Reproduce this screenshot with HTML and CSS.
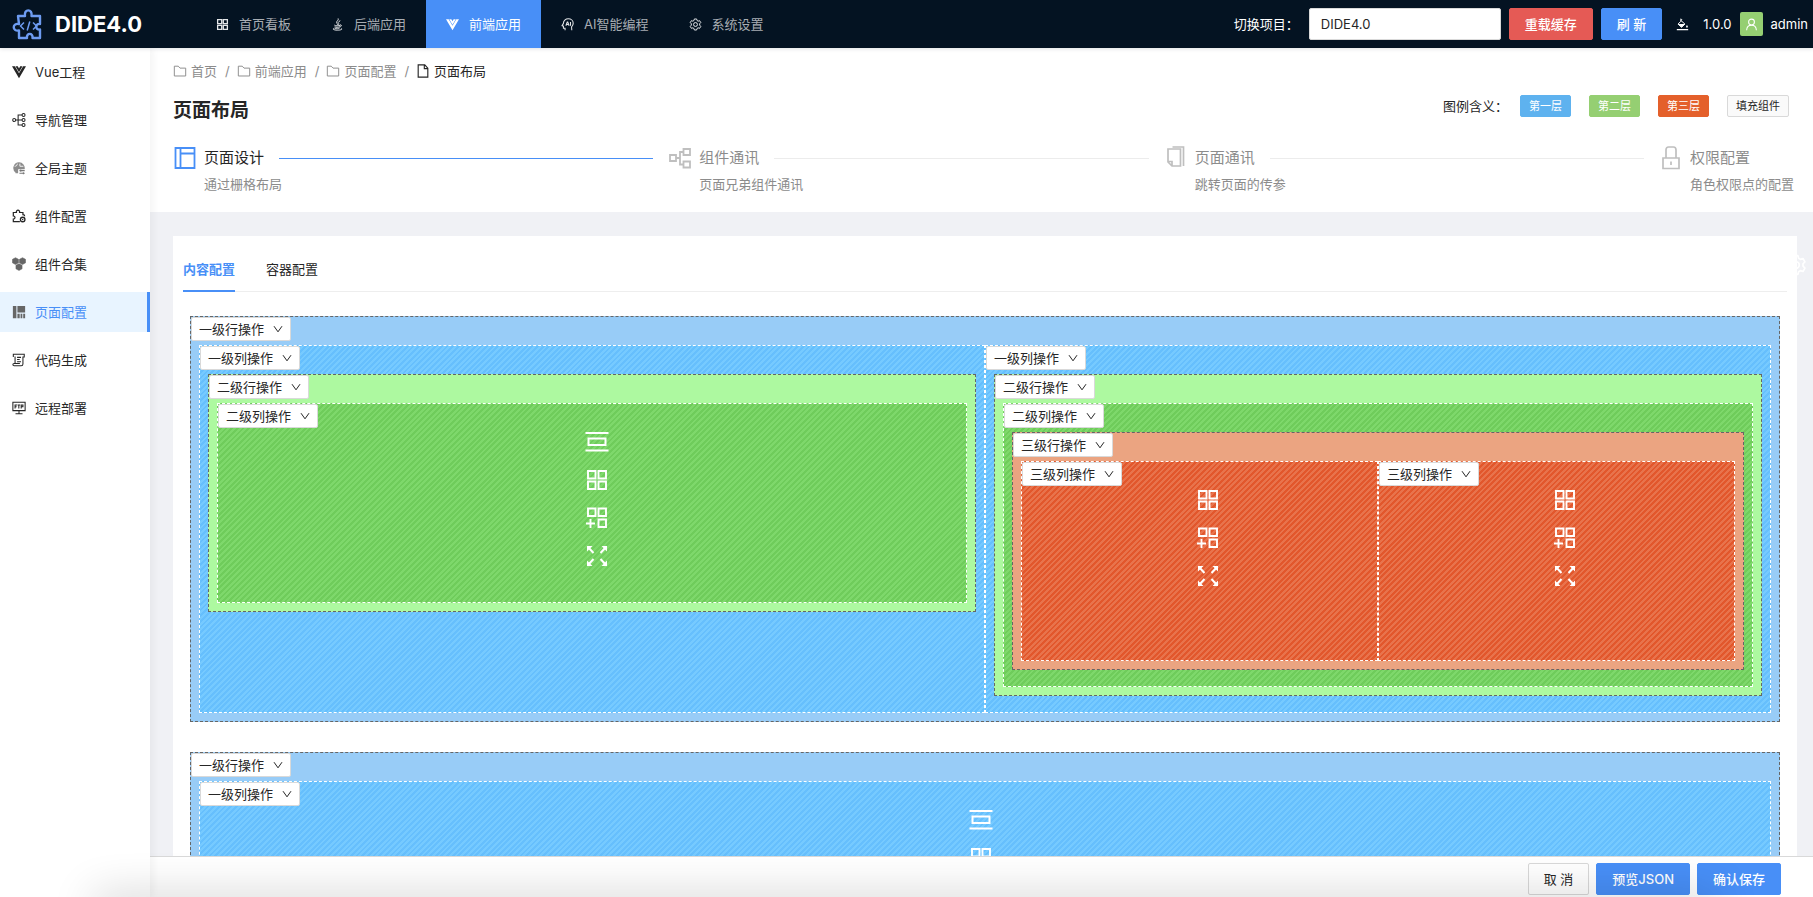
FILE: index.html
```html
<!DOCTYPE html>
<html lang="zh-CN">
<head>
<meta charset="utf-8">
<title>DIDE4.0 页面布局</title>
<link rel="stylesheet" href="styles.css">
</head>
<body>
<svg class="sprite" aria-hidden="true">
  <symbol id="i-grid" viewBox="0 0 16 16"><path d="M2 2h5v5H2zM9 2h5v5H9zM2 9h5v5H2zM9 9h5v5H9z" fill="none" stroke="currentColor" stroke-width="1.6"/></symbol>
  <symbol id="i-java" viewBox="0 0 16 16"><path d="M9 1C10 3 6 4 7 6c.5 1 1.300 1.300 1 2.500M11 3.500C8.500 5 8.500 5.500 9.300 6.500 10 7.500 9 8 9 8.500M4.500 9c1.500 1 5 1 6.500 0M11.500 8.500c2-.5 2 2-.5 2.500M5 11c1.500.8 4 .8 5.500 0M5.500 12.800c1.500.6 3 .6 4.500 0M4 12.500c-4 1.500 1 2.500 4 2.500s7-.8 5-2" fill="none" stroke="currentColor" stroke-width="1.200" stroke-linecap="round"/></symbol>
  <symbol id="i-vue" viewBox="0 0 16 16"><path d="M0 1.500h3.300L8 9.500l4.700-8H16L8 15z" fill="currentColor"/><path d="M4 1.500h2.600L8 4l1.400-2.500H12L8 8.300z" fill="currentColor"/></symbol>
  <symbol id="i-ai" viewBox="0 0 16 16"><path d="M5 15v-2.500H3V10L1.300 9.500 3 6.500C3 3.500 5.500 1 9 1s6 2.500 6 5.500c0 2-1 3.500-2 4.500l.3 4" fill="none" stroke="currentColor" stroke-width="1.300"/><path d="M6 9.500 7.700 5h.6L10 9.500M6.600 8h2.800M11.700 5v4.500" fill="none" stroke="currentColor" stroke-width="1.300"/></symbol>
  <symbol id="i-gear" viewBox="0 0 16 16"><path d="M6.600 1.200h2.800l.5 1.900 1.300.8 1.900-.6 1.400 2.400-1.400 1.400v1.700l1.400 1.500-1.400 2.400-1.900-.6-1.300.8-.5 1.900H6.600l-.5-1.900-1.300-.8-1.900.6-1.400-2.400 1.400-1.500V7.100L1.500 5.700l1.400-2.400 1.900.6 1.300-.8z" fill="none" stroke="currentColor" stroke-width="1.200" stroke-linejoin="round"/><circle cx="8" cy="8" r="2.400" fill="none" stroke="currentColor" stroke-width="1.200"/></symbol>
  <symbol id="i-bucket" viewBox="0 0 16 16"><path d="m6 1 1 1-1 1 5 4.500L6.800 11.500 2.500 7.500 6 4z" fill="none" stroke="currentColor" stroke-width="1.200"/><path d="M3 7.500h8l-4.200 4zM13.500 8.500c1.600 2 1.400 3.200 0 3.200s-1.600-1.200 0-3.200zM1 13.400h14V15H1z" fill="currentColor"/></symbol>
  <symbol id="i-user" viewBox="0 0 16 16"><circle cx="8" cy="5" r="3.600" fill="none" stroke="currentColor" stroke-width="1.300"/><path d="M2 15c.2-3.500 2.500-6 6-6s5.800 2.500 6 6" fill="none" stroke="currentColor" stroke-width="1.300"/></symbol>
  <symbol id="i-tree" viewBox="0 0 16 16"><g fill="none" stroke="currentColor" stroke-width="1.200"><circle cx="2.500" cy="8" r="1.700"/><circle cx="13.200" cy="2.300" r="1.700"/><circle cx="13.200" cy="8" r="1.700"/><circle cx="13.200" cy="13.700" r="1.700"/><path d="M4.200 8h7.300M11.500 2.300H7v11.400h4.500"/></g></symbol>
  <symbol id="i-theme" viewBox="0 0 16 16"><path d="M8 1.500a6.500 6.500 0 0 0-4 11.600V14h3V9.500h7.400A6.500 6.500 0 0 0 8 1.500z" fill="#8c8c8c"/><path d="M3 6c2 0 3-1 3-3M9 3v3h4" stroke="#fff" stroke-width="1" fill="none"/><path d="M8.500 11h6M8.500 14h6M10 9.800v2.400M13 12.800v2.400" stroke="#777" stroke-width="1.200"/></symbol>
  <symbol id="i-puzzle" viewBox="0 0 16 16"><path d="M9 14.500H1.500v-3c2.600 0 2.600-3.500 0-3.500V4h3.500c-.8-3.500 4.500-3.500 3.700 0h3.800v2.500c1 0 2 .7 2 1.700" fill="none" stroke="currentColor" stroke-width="1.400"/><circle cx="12.200" cy="12" r="2.600" fill="none" stroke="currentColor" stroke-width="1.500"/><circle cx="12.200" cy="12" r=".8" fill="currentColor"/></symbol>
  <symbol id="i-hex" viewBox="0 0 16 16"><path d="M4 .8 7.500 2.700v4L4 8.600.5 6.700v-4zM12 .8l3.500 1.900v4L12 8.600 8.500 6.700v-4zM8 7.600l3.500 1.900v4L8 15.400l-3.500-1.900v-4z" fill="#666" stroke="#666" stroke-width=".6"/></symbol>
  <symbol id="i-layout" viewBox="0 0 16 16"><path d="M1 1h4v14H1zM6.200 1H15v7.500H6.200zM6.200 10h2.600v5H6.200zM9.800 10h2v5h-2zM12.800 10H15v5h-2.200z" fill="#666"/></symbol>
  <symbol id="i-code" viewBox="0 0 16 16"><path d="M1.500 4.500V1.500h12.500v3h-2M3.500 4V12M12.500 4v8.500c0 2-1.500 2-2 2h-8c-2 0-2-2.500 0-2.500h6.500M5.800 5h4.500M5.800 7.500h3M5.800 10h4.500" fill="none" stroke="currentColor" stroke-width="1.200"/></symbol>
  <symbol id="i-ftp" viewBox="0 0 16 16"><path d="M1 1.500h14v9.500H1zM8 11v3.500M4 14.500h8M3.500 8.500v-4h2.200M3.500 6.500h1.800M6.300 4.500h3M7.800 4.500v4M10.500 8.500v-4h2v2h-2" fill="none" stroke="currentColor" stroke-width="1.200"/></symbol>
  <symbol id="i-folder" viewBox="0 0 16 16"><path d="M1.500 2.500h4.500l2 2.200h6.500v9h-13z" fill="none" stroke="currentColor" stroke-width="1.100"/></symbol>
  <symbol id="i-file" viewBox="0 0 16 16"><path d="M2.500 1h7.500l3.500 3.800V15h-11zM9.500 1v4.300h4" fill="none" stroke="currentColor" stroke-width="1.300"/></symbol>
  <symbol id="i-design" viewBox="0 0 24 24"><path d="M2.500 2h19v20h-19zM7.500 2v20M7.500 7.500h14" fill="none" stroke="currentColor" stroke-width="1.800"/></symbol>
  <symbol id="i-comm" viewBox="0 0 24 24"><path d="M2 9h6v6H2zM15.500 3h6.500v6h-6.500zM15.500 15.500h6.500v6h-6.500zM8 12h4M15.500 6H12v12.500h3.500" fill="none" stroke="currentColor" stroke-width="1.800"/></symbol>
  <symbol id="i-copy" viewBox="0 0 24 24"><path d="M4 3h12.500v17H8l-4-4zM8 20v-4.500H4M8.500 1h11v19" fill="none" stroke="currentColor" stroke-width="1.700"/></symbol>
  <symbol id="i-lock" viewBox="0 0 24 24"><path d="M4 12h16v10.500H4zM7 12V4c0-2 1-3 2.500-3h5c1.500 0 2.500 1 2.500 3v8M12 15.500v3.500" fill="none" stroke="currentColor" stroke-width="1.700"/></symbol>
  <symbol id="i-down" viewBox="0 0 10 10"><path d="M1 2.200 5 7.800 9 2.200" fill="none" stroke="currentColor" stroke-width="1"/></symbol>
  <symbol id="t-row" viewBox="0 0 24 24"><path d="M.5 3h23M.5 20.500h23M3.500 8.500h17v6.500h-17z" fill="none" stroke="currentColor" stroke-width="2"/></symbol>
  <symbol id="t-grid" viewBox="0 0 24 24"><path d="M3 3h7.500v7.500H3zM13.500 3H21v7.500h-7.500zM3 13.500h7.500V21H3zM13.500 13.500H21V21h-7.500z" fill="none" stroke="currentColor" stroke-width="1.900"/></symbol>
  <symbol id="t-add" viewBox="0 0 24 24"><path d="M3 2.500h7.500V10H3zM13.500 2.500H21V10h-7.500zM13.500 13.500H21V21h-7.500zM1 17.500h9M5.500 13v9" fill="none" stroke="currentColor" stroke-width="1.900"/></symbol>
  <symbol id="t-full" viewBox="0 0 24 24"><path d="M2.500 2.500 8.500 9M21.500 2.500l-6 6.500M2.500 21.500l6-6.500M21.500 21.500l-6-6.500" stroke="currentColor" stroke-width="2"/><path d="M2 2h5.500L2 7.500zM22 2v5.500L16.500 2zM2 22v-5.500L7.500 22zM22 22h-5.500l5.500-5.500z" fill="currentColor"/></symbol>
</svg>

<header class="topbar">
  <a class="brand" href="#">
    <svg class="brand-logo" viewBox="0 0 32 32"><path d="M6 8h7c-1.500-7.500 8-7.500 6.500 0H28v8c-5-1-5 6.500 0 5.500V30h-7.500c1-5.500-6.500-5.500-5.500 0H7v-7.500c-7 1.500-7-8 0-6.500z" fill="none" stroke="#6d9bf0" stroke-width="2.400" stroke-linejoin="round"/><path d="m12 14.500-3.500 3.500 3.500 3.500M21 14.500l3.500 3.500-3.500 3.500M17.800 13.500l-2.600 9" fill="none" stroke="#6d9bf0" stroke-width="1.500"/></svg>
    <span>DIDE4.0</span>
  </a>
  <nav class="mainnav">
    <a href="#"><svg><use href="#i-grid"/></svg>首页看板</a>
    <a href="#"><svg><use href="#i-java"/></svg>后端应用</a>
    <a href="#" class="active"><svg><use href="#i-vue"/></svg>前端应用</a>
    <a href="#"><svg><use href="#i-ai"/></svg>AI智能编程</a>
    <a href="#"><svg><use href="#i-gear"/></svg>系统设置</a>
  </nav>
  <div class="tools">
    <label for="project">切换项目：</label>
    <select id="project" class="project"><option>DIDE4.0</option></select>
    <button class="btn danger" type="button">重载缓存</button>
    <button class="btn primary" type="button">刷 新</button>
    <svg class="bucket"><use href="#i-bucket"/></svg>
    <span>1.0.0</span>
    <span class="avatar"><svg><use href="#i-user"/></svg></span>
    <span>admin</span>
  </div>
</header>

<div class="body">
  <nav class="sidebar">
    <a href="#"><svg><use href="#i-vue"/></svg>Vue工程</a>
    <a href="#"><svg><use href="#i-tree"/></svg>导航管理</a>
    <a href="#"><svg><use href="#i-theme"/></svg>全局主题</a>
    <a href="#"><svg><use href="#i-puzzle"/></svg>组件配置</a>
    <a href="#"><svg><use href="#i-hex"/></svg>组件合集</a>
    <a href="#" class="active"><svg><use href="#i-layout"/></svg>页面配置</a>
    <a href="#"><svg><use href="#i-code"/></svg>代码生成</a>
    <a href="#"><svg><use href="#i-ftp"/></svg>远程部署</a>
  </nav>

  <main class="main">
    <section class="pagehead">
      <nav class="crumbs">
        <a href="#"><svg><use href="#i-folder"/></svg>首页</a><span>/</span>
        <a href="#"><svg><use href="#i-folder"/></svg>前端应用</a><span>/</span>
        <a href="#"><svg><use href="#i-folder"/></svg>页面配置</a><span>/</span>
        <a href="#" class="current"><svg><use href="#i-file"/></svg>页面布局</a>
      </nav>
      <div class="titlebar">
        <h1>页面布局</h1>
        <div class="legend">
          <span>图例含义：</span>
          <div class="tags">
            <span class="tag blue">第一层</span>
            <span class="tag green">第二层</span>
            <span class="tag orange">第三层</span>
            <span class="tag plain">填充组件</span>
          </div>
        </div>
      </div>
      <ol class="steps">
        <li class="on"><svg><use href="#i-design"/></svg><div><h2>页面设计</h2><p>通过栅格布局</p></div></li>
        <li><svg><use href="#i-comm"/></svg><div><h2>组件通讯</h2><p>页面兄弟组件通讯</p></div></li>
        <li><svg><use href="#i-copy"/></svg><div><h2>页面通讯</h2><p>跳转页面的传参</p></div></li>
        <li><svg><use href="#i-lock"/></svg><div><h2>权限配置</h2><p>角色权限点的配置</p></div></li>
      </ol>
    </section>

    <div class="scroll">
      <button class="handle" type="button" aria-label="设置"><svg><use href="#i-gear"/></svg></button>
      <section class="card">
        <div class="tabs" role="tablist">
          <button type="button" role="tab" class="active" aria-selected="true">内容配置</button>
          <button type="button" role="tab">容器配置</button>
        </div>
        <div class="canvas">
          <div class="row r1">
            <button class="op" type="button">一级行操作<svg><use href="#i-down"/></svg></button>
            <div class="cols">
              <div class="col c1">
                <button class="op" type="button">一级列操作<svg><use href="#i-down"/></svg></button>
                <div class="row r2">
                  <button class="op" type="button">二级行操作<svg><use href="#i-down"/></svg></button>
                  <div class="cols">
                    <div class="col c2 leaf">
                      <button class="op" type="button">二级列操作<svg><use href="#i-down"/></svg></button>
                      <div class="acts"><svg><use href="#t-row"/></svg><svg><use href="#t-grid"/></svg><svg><use href="#t-add"/></svg><svg><use href="#t-full"/></svg></div>
                    </div>
                  </div>
                </div>
              </div>
              <div class="col c1">
                <button class="op" type="button">一级列操作<svg><use href="#i-down"/></svg></button>
                <div class="row r2">
                  <button class="op" type="button">二级行操作<svg><use href="#i-down"/></svg></button>
                  <div class="cols">
                    <div class="col c2">
                      <button class="op" type="button">二级列操作<svg><use href="#i-down"/></svg></button>
                      <div class="row r3">
                        <button class="op" type="button">三级行操作<svg><use href="#i-down"/></svg></button>
                        <div class="cols">
                          <div class="col c3 leaf">
                            <button class="op" type="button">三级列操作<svg><use href="#i-down"/></svg></button>
                            <div class="acts"><svg><use href="#t-grid"/></svg><svg><use href="#t-add"/></svg><svg><use href="#t-full"/></svg></div>
                          </div>
                          <div class="col c3 leaf">
                            <button class="op" type="button">三级列操作<svg><use href="#i-down"/></svg></button>
                            <div class="acts"><svg><use href="#t-grid"/></svg><svg><use href="#t-add"/></svg><svg><use href="#t-full"/></svg></div>
                          </div>
                        </div>
                      </div>
                    </div>
                  </div>
                </div>
              </div>
            </div>
          </div>
          <div class="row r1">
            <button class="op" type="button">一级行操作<svg><use href="#i-down"/></svg></button>
            <div class="cols">
              <div class="col c1 leaf">
                <button class="op" type="button">一级列操作<svg><use href="#i-down"/></svg></button>
                <div class="acts"><svg><use href="#t-row"/></svg><svg><use href="#t-grid"/></svg><svg><use href="#t-add"/></svg><svg><use href="#t-full"/></svg></div>
              </div>
            </div>
          </div>
        </div>
      </section>
    </div>

    <footer class="actions">
      <button class="btn default" type="button">取 消</button>
      <button class="btn primary" type="button">预览JSON</button>
      <button class="btn primary" type="button">确认保存</button>
    </footer>
  </main>
</div>
<div class="shade"></div>
</body>
</html>
```

FILE: styles.css
```css
* { box-sizing: border-box; }
body {
  margin: 0;
  height: 100vh;
  display: flex;
  flex-direction: column;
  overflow: hidden;
  font: 13px/20px Inter, "Noto Sans CJK SC", sans-serif;
  color: #262626;
  background: #f0f1f5;
}
a { color: inherit; text-decoration: none; }
button, select { font: inherit; color: inherit; margin: 0; }
svg { flex: none; }
.sprite { display: none; }

.topbar {
  display: flex;
  align-items: center;
  height: 48px;
  flex: none;
  padding: 0 5px 0 12px;
  background: #041322;
  color: #fff;
  position: relative;
  z-index: 2;
  box-shadow: 0 1px 4px rgba(0, 21, 41, .12);
}
.brand { display: flex; align-items: center; gap: 11px; width: 184px; font-size: 22px; font-weight: 700; }
.brand-logo { width: 32px; height: 32px; }
.mainnav { display: flex; align-self: stretch; }
.mainnav a { display: flex; align-items: center; gap: 10px; padding: 0 20px; color: #a8adb3; }
.mainnav svg { width: 13px; height: 13px; color: #e4e6e8; }
.mainnav .active, .mainnav .active svg { color: #fff; }
.mainnav .active { background: #488ff7; }
.tools { display: flex; align-items: center; gap: 8px; margin-left: auto; }
.project {
  appearance: none;
  width: 192px;
  height: 32px;
  padding: 0 11px;
  margin-left: 2px;
  border: 1px solid #d9d9d9;
  border-radius: 2px;
  background: #fff;
  color: #262626;
}
.btn { height: 32px; padding: 0 15px; border: 1px solid #d9d9d9; border-radius: 2px; background: #fff; }
.btn.danger { background: #e55a55; border-color: #e55a55; color: #fff; font-weight: 500; }
.btn.primary { background: #488ff7; border-color: #488ff7; color: #fff; font-weight: 500; }
.bucket { width: 13px; height: 13px; margin: 0 6px; }
.avatar { display: grid; place-items: center; width: 23px; height: 24px; border-radius: 2px; background: #95cf72; }
.avatar svg { width: 13px; height: 13px; }

.body { flex: 1; display: flex; min-height: 0; }
.sidebar {
  width: 150px;
  flex: none;
  display: flex;
  flex-direction: column;
  gap: 8px;
  padding-top: 4px;
  background: #fff;
  box-shadow: 2px 0 8px rgba(29, 35, 41, .06);
  z-index: 1;
}
.sidebar a { display: flex; align-items: center; gap: 9px; height: 40px; padding-left: 12px; border-right: 3px solid transparent; }
.sidebar svg { width: 14px; height: 14px; }
.sidebar .active { background: #e8f4ff; color: #488ff7; border-color: #488ff7; }

.main { flex: 1; min-width: 0; display: flex; flex-direction: column; }
.pagehead { background: #fff; padding: 13px 16px 18px 23px; flex: none; }
.crumbs { display: flex; color: #8c8c8c; }
.crumbs a { display: flex; align-items: center; gap: 4px; }
.crumbs svg { width: 14px; height: 14px; }
.crumbs span { margin: 0 7px 0 8px; }
.crumbs .current { color: #262626; }
.titlebar { display: flex; justify-content: space-between; align-items: center; margin-top: 15px; height: 30px; }
h1 { margin: 0; font-size: 19px; line-height: 30px; font-weight: 700; }
.legend { display: flex; align-items: center; gap: 12px; padding-right: 8px; margin-bottom: 10px; }
.tags { display: flex; gap: 18px; }
.tag { padding: 0 8px; border: 1px solid; border-radius: 2px; font-size: 11px; line-height: 20px; }
.tag.blue { background: #5eb2ef; border-color: #5eb2ef; color: #fff; }
.tag.green { background: #95cf72; border-color: #95cf72; color: #fff; }
.tag.orange { background: #e4602b; border-color: #e4602b; color: #fff; }
.tag.plain { background: #fafafa; border-color: #d9d9d9; }

.steps { list-style: none; display: flex; margin: 20px 0 0; padding: 0; color: #8c8c8c; }
.steps li { flex: 1; display: flex; gap: 7px; min-width: 0; }
.steps li:last-child { flex: none; padding-right: 3px; }
.steps svg { width: 24px; height: 24px; color: #bfbfbf; }
.steps .on svg { color: #488ff7; }
.steps div { flex: 1; white-space: nowrap; }
.steps h2 { display: flex; align-items: center; gap: 15px; margin: 0; padding-right: 15px; font-size: 15px; line-height: 24px; font-weight: 400; }
.steps li:last-child h2 { padding-right: 0; }
.steps li:not(:last-child) h2::after { content: ""; flex: 1; height: 1px; background: #ececec; }
.steps .on h2 { color: #262626; }
.steps .on:not(:last-child) h2::after { background: #488ff7; }
.steps p { margin: 4px 0 0; }

.scroll { flex: 1; min-height: 0; overflow: hidden; padding: 24px 16px 0 23px; position: relative; }
.handle { position: absolute; top: 42px; right: 6px; padding: 0; border: 0; background: none; color: #fff; line-height: 0; }
.handle svg { width: 22px; height: 22px; }
.card { background: #fff; padding: 12px 10px 24px; position: relative; }
.tabs { display: flex; gap: 31px; border-bottom: 1px solid #eee; }
.tabs button { border: 0; background: none; padding: 11px 0 11px; line-height: 20px; border-bottom: 2px solid transparent; margin-bottom: -1px; }
.tabs .active { color: #488ff7; font-weight: 700; border-color: #488ff7; }
.canvas { display: flex; flex-direction: column; gap: 30px; padding: 24px 7px 0; }

.row { border: 1px dashed #666; padding: 0 8px 8px; }
.col { flex: 1; min-width: 0; border: 1px dashed #fff; padding: 0 8px 16px; }
.cols { display: flex; }
.r1 { background: #98ccf7; }
.r2 { background: #adf9a0; }
.r3 { background: #eba481; }
.c1 { background: repeating-linear-gradient(135deg, #76caff 0 2px, #66bffd 2px 4px); }
.c2 { background: repeating-linear-gradient(135deg, #7ed86b 0 2px, #6fcc5b 2px 4px); }
.c3 { background: repeating-linear-gradient(135deg, #e8734c 0 2px, #e2572c 2px 4px); }
.op {
  display: flex;
  align-items: center;
  gap: 9px;
  height: 24px;
  margin: 0 -8px 4px;
  padding: 0 7px;
  border: 1px solid #d9d9d9;
  border-radius: 2px;
  background: #fff;
}
.op svg { width: 10px; height: 10px; }
.leaf { min-height: 200px; padding-bottom: 0; }
.leaf .op { margin-bottom: 2px; }
.acts { display: flex; flex-direction: column; gap: 14px; padding-left: 49%; color: #fff; }
.acts svg { width: 24px; height: 24px; }

.actions {
  flex: none;
  display: flex;
  justify-content: flex-end;
  gap: 7px;
  height: 41px;
  padding: 6px 32px 0 0;
  border-top: 1px solid #d9d9d9;
  background: #fff;
}
.shade {
  position: fixed;
  z-index: 3;
  left: 94px;
  right: 94px;
  bottom: -20px;
  height: 20px;
  box-shadow: 0 0 44px rgba(0, 0, 0, .24);
  pointer-events: none;
}
```
